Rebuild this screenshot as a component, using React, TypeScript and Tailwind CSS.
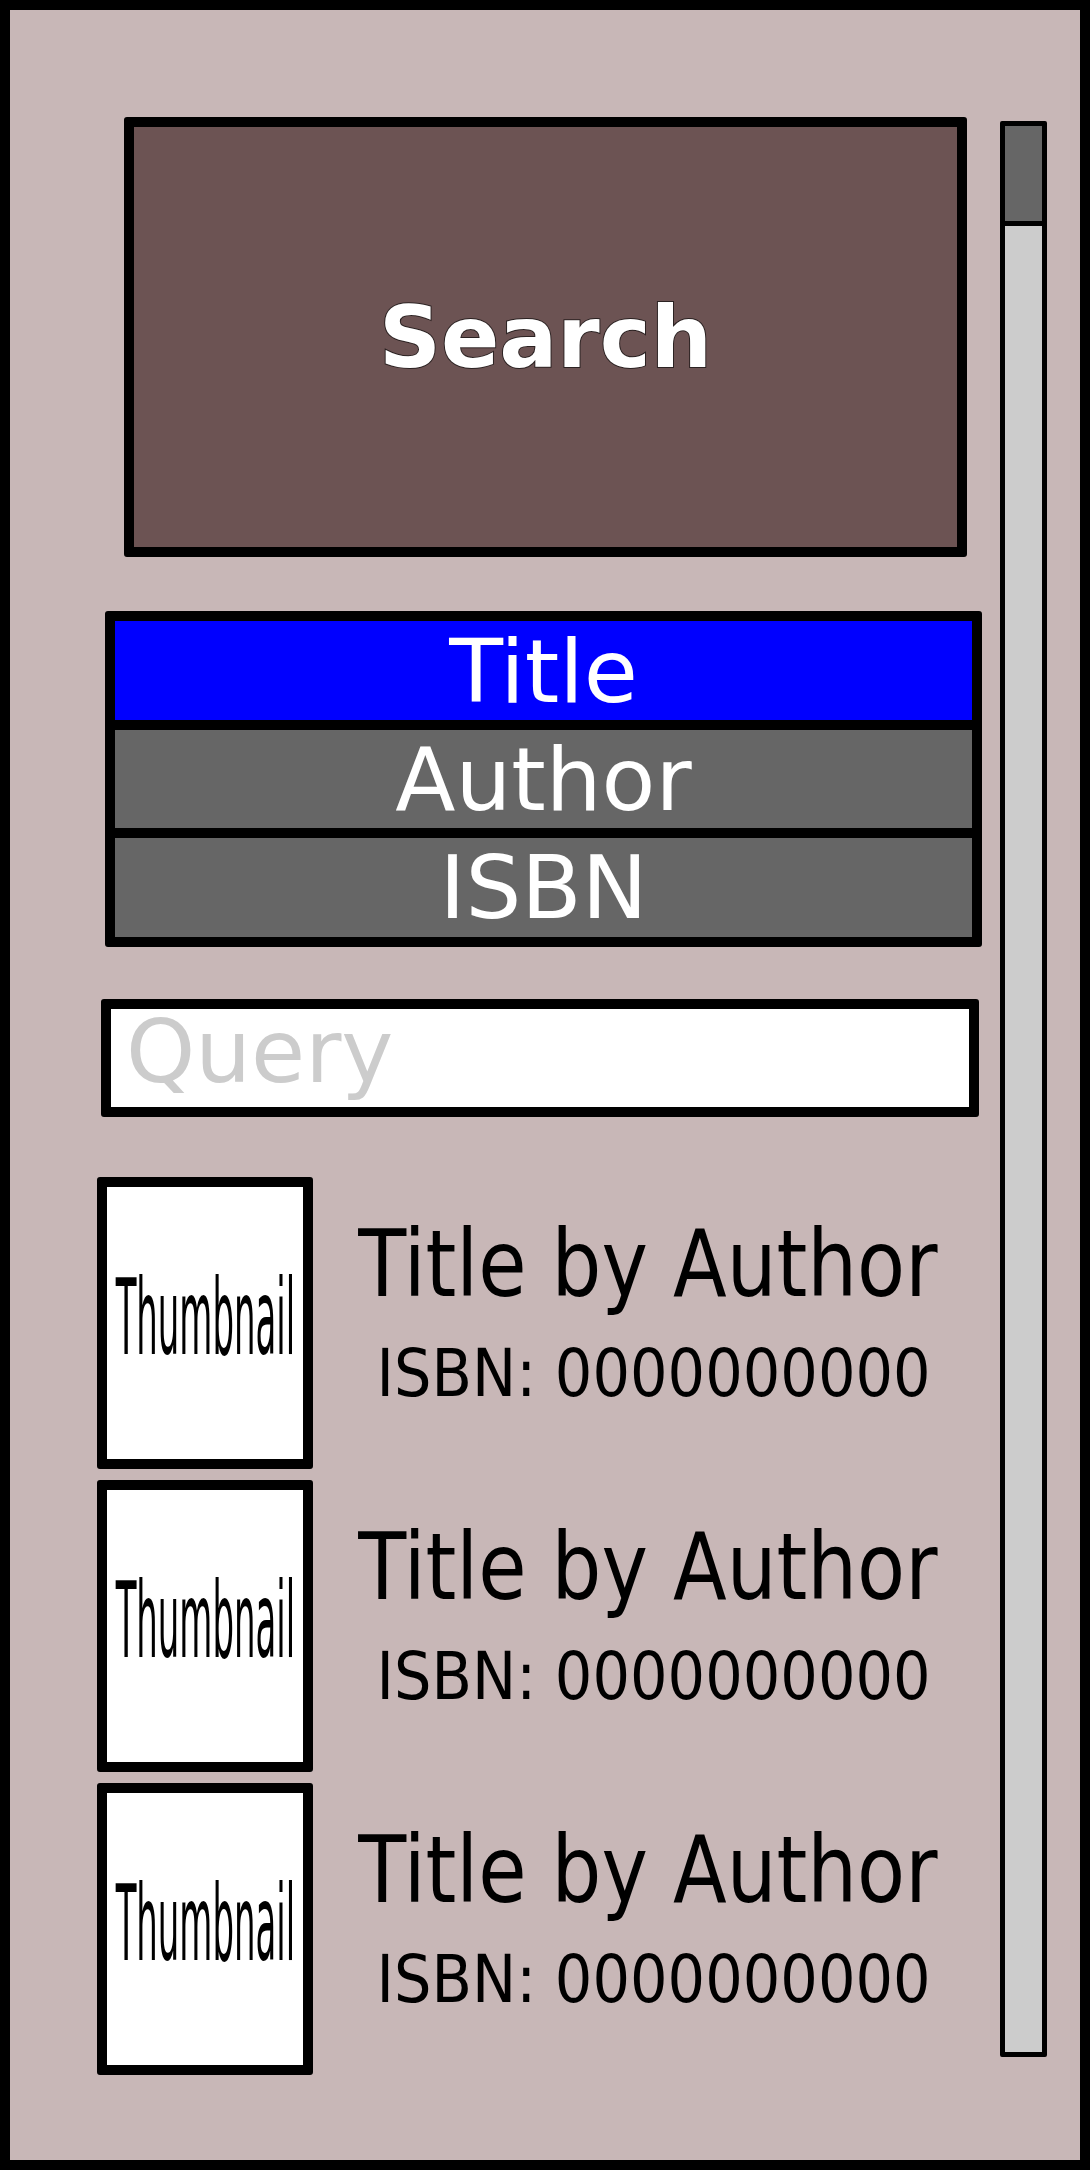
const results = [1, 2, 3];

function ResultRow() {
  return (
    <div className="flex h-[292px]">
      <div className="flex h-[292px] w-[216px] shrink-0 items-center justify-center overflow-visible rounded-[3px] border-[10px] border-black bg-white">
        <span className="-mx-[200px] mb-[10px] scale-x-[0.32] whitespace-nowrap text-[106px] leading-none text-black">
          Thumbnail
        </span>
      </div>
      <div className="flex min-w-0 flex-1 flex-col items-center pr-[18px] pt-[41px]">
        <span className="-mx-[60px] scale-x-[0.845] whitespace-nowrap text-[93px] leading-none text-black">
          Title by Author
        </span>
        <span className="ml-[12px] mt-[30px] scale-x-[0.895] whitespace-nowrap text-[66px] leading-none text-black">
          ISBN: 0000000000
        </span>
      </div>
    </div>
  );
}

export default function App() {
  return (
    <div className="flex h-[2170px] w-[1090px] overflow-hidden border-[10px] border-black bg-[#c8b7b7] font-['DejaVu_Sans',sans-serif]">
      {/* main column */}
      <div className="flex w-[990px] shrink-0 flex-col pl-[87px]">
        <button className="ml-[27px] mt-[107px] flex h-[440px] w-[843px] items-center justify-center rounded-[3px] border-[10px] border-black bg-[#6c5353]">
          <span className="text-[86px] font-bold leading-none text-white [-webkit-text-stroke:2px_#2b2222] [paint-order:stroke_fill]">
            Search
          </span>
        </button>

        <div className="ml-[8px] mt-[54px] flex w-[877px] flex-col divide-y-[10px] divide-black rounded-[3px] border-[10px] border-black">
          <div className="flex h-[109px] items-center justify-center bg-[#0000ff] pt-[3px] text-[88px] leading-none text-white">
            Title
          </div>
          <div className="flex h-[108px] items-center justify-center bg-[#666666] pt-[2px] text-[88px] leading-none text-white">
            Author
          </div>
          <div className="flex h-[99px] items-center justify-center bg-[#666666] text-[88px] leading-none text-white">
            ISBN
          </div>
        </div>

        <div className="ml-[4px] mt-[52px] h-[118px] w-[878px] rounded-[3px] border-[10px] border-black bg-white">
          <input
            type="text"
            placeholder="Query"
            className="h-full w-full bg-white pb-[14px] pl-[15px] text-[88px] leading-none text-black outline-none placeholder:text-[#cccccc]"
          />
        </div>

        <div className="mt-[60px] flex flex-col gap-[11px]">
          {results.map((r) => (
            <ResultRow key={r} />
          ))}
        </div>
      </div>

      {/* scrollbar */}
      <div className="mt-[111px] h-[1936px] w-[47px] shrink-0 rounded-[2px] border-[5px] border-black bg-[#cccccc]">
        <div className="h-[100px] border-b-[5px] border-black bg-[#666666]" />
      </div>
    </div>
  );
}
